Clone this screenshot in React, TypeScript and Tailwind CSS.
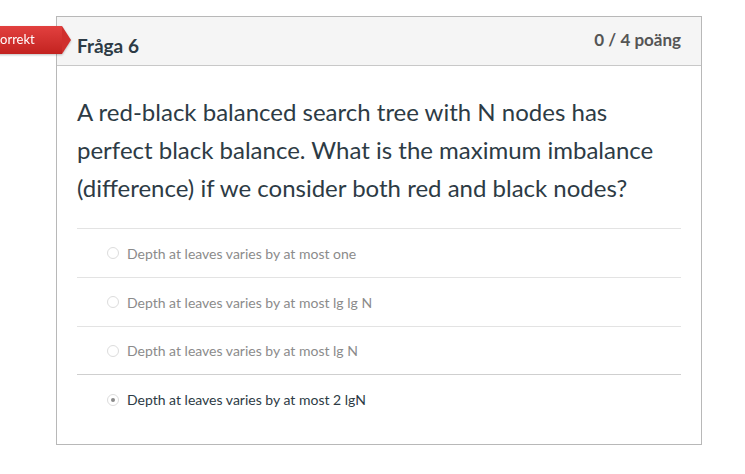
import React from 'react';

const answers = [
  { text: 'Depth at leaves varies by at most one', selected: false },
  { text: 'Depth at leaves varies by at most lg lg N', selected: false },
  { text: 'Depth at leaves varies by at most lg N', selected: false },
  { text: 'Depth at leaves varies by at most 2 lgN', selected: true },
];

export default function App() {
  return (
    <div className="relative min-h-screen bg-white pt-[16px] pl-[56px]" style={{ fontFamily: 'Lato, "Noto Sans", sans-serif' }}>
      <div className="w-[646px] border border-[#b8b8b8]">
        {/* Header */}
        <div className="flex h-[49px] items-start justify-between border-b border-[#c8c8c8] bg-[#f5f5f5] px-[20px]">
          <h2 className="mt-[16px] text-[19px] font-bold leading-[26px] text-[#2d3b45]">Fråga 6</h2>
          <div className="mt-[11px] text-[17px] font-bold leading-[24px] text-[#555]">0 / 4 poäng</div>
        </div>

        {/* Body */}
        <div className="px-[20px] pb-[20px] pt-[27px]">
          <p className="text-[24px] leading-[38px] text-[#2d3b45]">
            A red-black balanced search tree with N nodes has perfect black balance. What is the maximum imbalance (difference) if we consider both red and black nodes?
          </p>

          <div className="mt-[21px]">
            {answers.map((a, i) => (
              <div
                key={i}
                className={`flex h-[49px] items-center border-t border-[#e3e3e3] pl-[30px] ${i === 2 ? 'border-b border-b-[#cfcfcf]' : ''} ${i === 3 ? 'border-t-0' : ''}`}
              >
                <span className="flex h-[12px] w-[12px] items-center justify-center rounded-full border border-[#dcdcdc] bg-white">
                  {a.selected && <span className="h-[4px] w-[4px] rounded-full bg-[#8a8a8a]"></span>}
                </span>
                <span className={`ml-[8px] text-[14px] ${a.selected ? 'text-[#2d3b45]' : 'text-[#8b8b8b]'}`}>{a.text}</span>
              </div>
            ))}
          </div>
        </div>
      </div>

      {/* Incorrect banner, overlapping the card edge */}
      <div className="absolute left-[-25px] top-[26px] flex h-[28px] items-center drop-shadow-[0_1px_1px_rgba(0,0,0,0.25)]">
        <div className="flex h-full w-[87px] items-center bg-gradient-to-b from-[#e2403f] to-[#c3221f] pl-[8px] text-[13px] text-white">
          Inkorrekt
        </div>
        <div className="h-0 w-0 border-y-[14px] border-l-[9px] border-y-transparent border-l-[#d02f2d]"></div>
      </div>
    </div>
  );
}
